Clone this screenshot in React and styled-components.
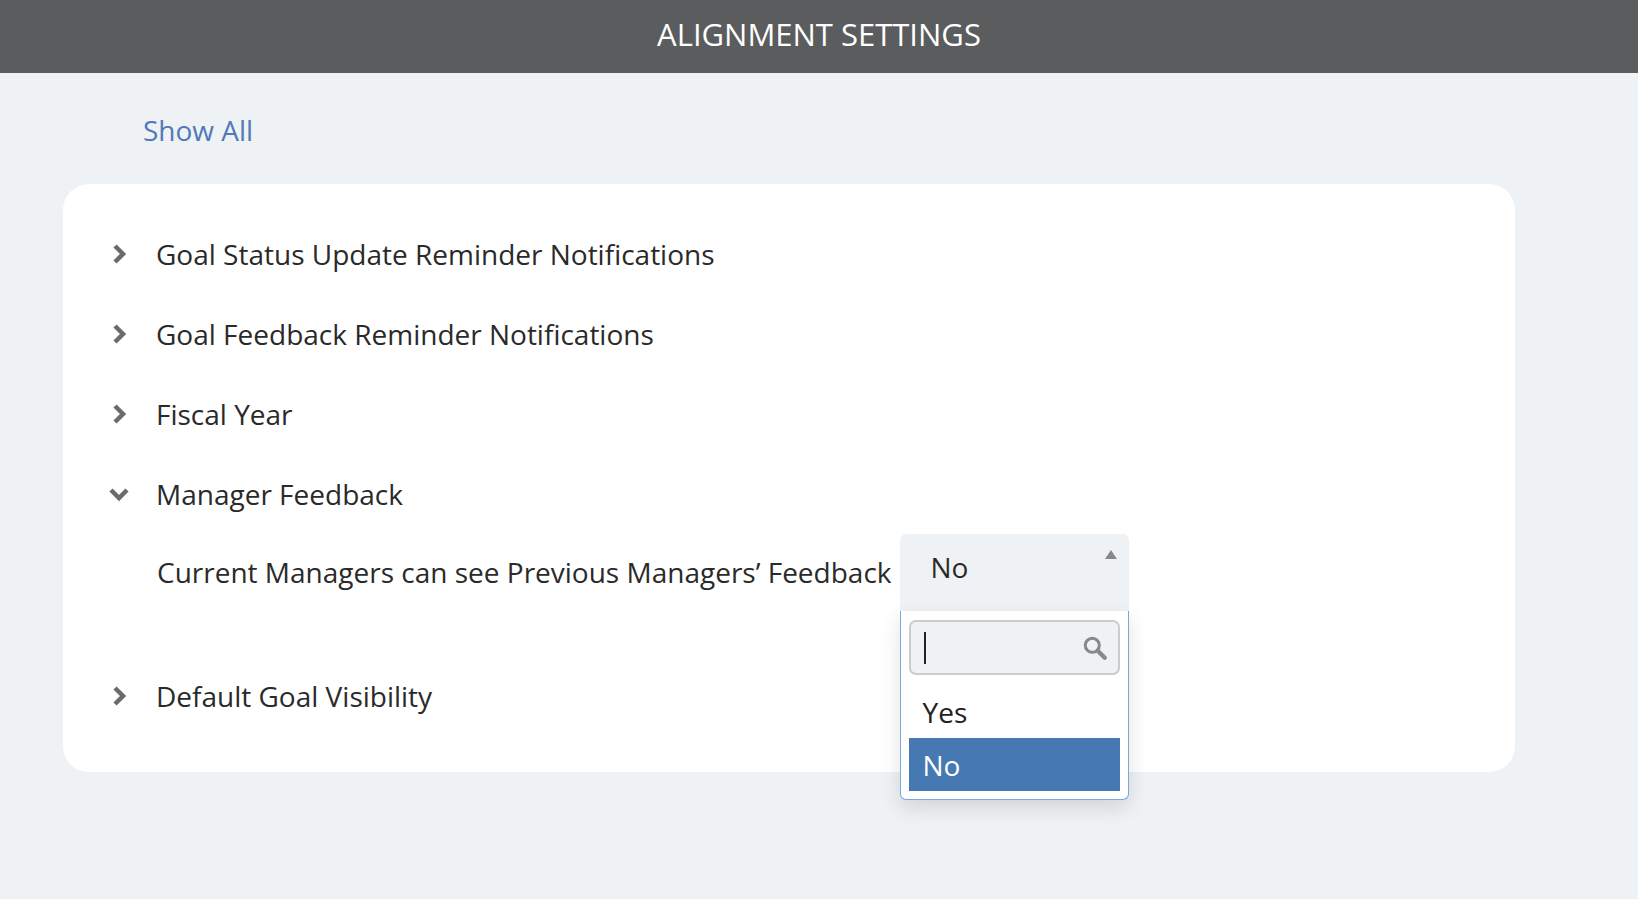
import React from "react";
import styled, { createGlobalStyle } from "styled-components";

const Global = createGlobalStyle`
  html, body { margin: 0; padding: 0; background: #eff2f5; }
  #root { min-height: 100vh; }
  body { font-family: "Open Sans", "Liberation Sans", sans-serif; color: #222; }
`;

const Header = styled.div`
  height: 73px; background: #5b5c5e; color: #fff;
  display: flex; align-items: center; justify-content: center;
  font-size: 31px; padding-left: 0; padding-bottom: 6px; box-sizing: border-box;
`;
const Main = styled.div`padding: 0 123px 0 63px;`;
const ShowAll = styled.a`
  display: block; color: #4f79b9; font-size: 28px; margin: 38px 0 0 80px; height: 73px;
`;
const Card = styled.div`
  background: #fff; border-radius: 26px; padding: 30px 0 36px 40px; width: 1452px;
  box-sizing: border-box;
`;
const Row = styled.div`
  display: flex; align-items: center; height: 80px; font-size: 28px; color: #2a2a2a;
`;
const Icon = styled.span`
  width: 53px; display: flex; align-items: center; padding-left: 6px; box-sizing: border-box;
`;
const Sub = styled.div`
  display: flex; align-items: flex-start; height: 122px; padding-left: 54px; font-size: 28px; color: #2a2a2a;
`;
const Label = styled.div`padding-top: 19px; margin-right: 8px;`;
const Select = styled.div`position: relative; width: 229px;`;
const SelectHead = styled.div`
  height: 77px; background: #eff2f5; border-radius: 6px 6px 0 0; position: relative;
  box-sizing: border-box; padding: 14px 0 0 31px; font-size: 28px;
`;
const Caret = styled.span`
  position: absolute; right: 12px; top: 16px; width: 0; height: 0;
  border-left: 6px solid transparent; border-right: 6px solid transparent; border-bottom: 9px solid #888;
`;
const Drop = styled.div`
  position: absolute; left: 0; right: 0; top: 77px; background: #fff;
  border: 1.5px solid #7aa7dc; border-top: none; border-radius: 0 0 6px 6px;
  padding: 9px 8px 8px; box-shadow: 0 8px 20px rgba(0,0,0,0.12); z-index: 2;
`;
const Search = styled.div`
  height: 55px; border: 2px solid #ccc; border-radius: 7px; background: #eff2f5;
  box-sizing: border-box; display: flex; align-items: center; justify-content: space-between; padding: 0 10px 0 13px;
`;
const Cursor = styled.span`width: 2px; height: 32px; background: #222;`;
const Option = styled.div`
  height: 53px; display: flex; align-items: center; padding-left: 14px; font-size: 28px;
  background: ${p => (p.$active ? "#4679b2" : "transparent")};
  color: ${p => (p.$active ? "#fff" : "#222")};
  margin-top: ${p => (p.$active ? "0" : "10px")};
`;

const Chevron = ({ down }) => (
  <svg width="20" height="20" viewBox="0 0 20 20">
    <path d={down ? "M2 6 L10 14 L18 6" : "M6 2 L14 10 L6 18"} fill="none" stroke="#6b6b6b" strokeWidth="4.5" strokeLinejoin="miter" />
  </svg>
);

export default function App() {
  return (
    <>
      <Global />
      <Header>ALIGNMENT SETTINGS</Header>
      <Main>
        <ShowAll>Show All</ShowAll>
        <Card>
          <Row><Icon><Chevron /></Icon>Goal Status Update Reminder Notifications</Row>
          <Row><Icon><Chevron /></Icon>Goal Feedback Reminder Notifications</Row>
          <Row><Icon><Chevron /></Icon>Fiscal Year</Row>
          <Row><Icon><Chevron down /></Icon>Manager Feedback</Row>
          <Sub>
            <Label>Current Managers can see Previous Managers’ Feedback</Label>
            <Select>
              <SelectHead>No<Caret /></SelectHead>
              <Drop>
                <Search>
                  <Cursor />
                  <svg width="26" height="26" viewBox="0 0 24 24">
                    <circle cx="9.5" cy="9.5" r="6.5" fill="none" stroke="#888" strokeWidth="2.8" />
                    <path d="M14.5 14.5 L21 21" stroke="#888" strokeWidth="4" strokeLinecap="round" />
                  </svg>
                </Search>
                <Option>Yes</Option>
                <Option $active>No</Option>
              </Drop>
            </Select>
          </Sub>
          <Row><Icon><Chevron /></Icon>Default Goal Visibility</Row>
        </Card>
      </Main>
    </>
  );
}
